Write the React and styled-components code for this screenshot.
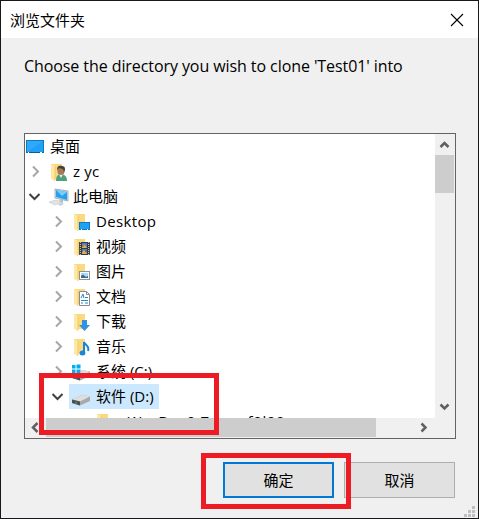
import React from "react";
import styled, { createGlobalStyle } from "styled-components";

const Global = createGlobalStyle`
  * { box-sizing: border-box; }
  body { margin: 0; background: #f0f0f0; }
`;
const Dialog = styled.div`
  position: relative;
  width: 479px;
  height: 519px;
  display: flex;
  flex-direction: column;
  background: #f0f0f0;
  border: 1px solid #18181a;
  color: #000;
  font: 15px/25px "Open Sans", "Noto Sans CJK SC", sans-serif;
  overflow: hidden;
`;
const TitleBar = styled.header`
  height: 37px;
  flex: none;
  display: flex;
  align-items: center;
  justify-content: space-between;
  padding: 0 14px 0 9px;
  background: #fff;
`;
const Title = styled.span`
  font-family: "Noto Sans CJK SC", sans-serif;
`;
const Message = styled.p`
  margin: 15px 0 0 23px;
  height: 80px;
  font-size: 16px;
  line-height: 26px;
  letter-spacing: -0.08px;
  white-space: nowrap;
`;
const TreePanel = styled.section`
  width: 432px;
  height: 306px;
  flex: none;
  margin-left: 23px;
  border: 1px solid #646464;
  display: grid;
  grid-template: 284px 20px / 410px 20px;
`;
const Tree = styled.div`
  background: #fff;
  overflow: hidden;
`;
const Row = styled.div`
  height: 25px;
  display: flex;
  align-items: center;
  padding-left: ${(p) => p.$indent}px;
`;
const Toggle = styled.span`
  width: 21px;
  height: 25px;
  flex: none;
  display: flex;
  align-items: center;
  padding-left: ${(p) => (p.$open ? 3 : 5)}px;
`;
const Item = styled.span`
  height: 25px;
  display: flex;
  align-items: center;
  padding: 0 5px 0 ${(p) => (p.$root ? 1 : 3)}px;
  background: ${(p) => (p.$selected ? "#cce8ff" : "transparent")};
`;
const Label = styled.span`
  margin-left: 4px;
  white-space: nowrap;
  letter-spacing: ${(p) => p.$spacing || 0}px;
`;
const VBar = styled.div`
  display: flex;
  flex-direction: column;
  align-items: flex-start;
  background: #f0f0f0;
`;
const HBar = styled.div`
  display: flex;
  background: #f0f0f0;
`;
const VThumb = styled.div`
  width: 19px;
  height: 38px;
  margin-bottom: auto;
  background: #cdcdcd;
`;
const HThumb = styled.div`
  width: 330px;
  height: 19px;
  margin-right: auto;
  background: #cdcdcd;
`;
const Arrow = styled.span`
  width: ${(p) => p.$w}px;
  height: ${(p) => p.$h}px;
  display: flex;
  align-items: center;
  justify-content: center;
`;
const Buttons = styled.footer`
  display: flex;
  gap: 10px;
  margin: 23px 0 0 222px;
`;
const Button = styled.button`
  width: 111px;
  height: 36px;
  padding: 0;
  border: ${(p) => (p.$primary ? "2px solid #0078d7" : "1px solid #adadad")};
  background: #e1e1e1;
  color: #000;
  font: 15px/20px "Noto Sans CJK SC", sans-serif;
`;
const Marker = styled.div`
  position: absolute;
  left: ${(p) => p.$x}px;
  top: ${(p) => p.$y}px;
  width: ${(p) => p.$w}px;
  height: ${(p) => p.$h}px;
  border: 5px solid #ed1c24;
  pointer-events: none;
`;
const Grip = styled.svg`
  position: absolute;
  right: 3px;
  bottom: 1px;
`;

const chevrons = {
  right: "M3 1.5L8 6.5L3 11.5",
  down: "M1.5 4L6.5 9L11.5 4",
  up: "M2.5 9L6.5 5L10.5 9",
  left: "M8.5 2L4 6.5L8.5 11",
  scrollRight: "M4.5 2.5L8.5 6.5L4.5 10.5",
  scrollDown: "M2.5 4.5L6.5 8.5L10.5 4.5",
};
const Chevron = ({ kind, color = "#606060", width = 2 }) => (
  <svg width="13" height="13" viewBox="0 0 13 13">
    <path d={chevrons[kind]} fill="none" stroke={color} strokeWidth={width} />
  </svg>
);

const FolderBase = () => (
  <>
    <path d="M2 2H10L13 2V17H2Z" fill="#f9da7e" />
    <path d="M2 2L6 4V19L2 17Z" fill="#ffe8a3" />
    <path d="M6 4V19" stroke="#e5bb55" strokeWidth=".6" />
  </>
);
const overlays = {
  user: (
    <>
      <path d="M7 19C7 14 9 12 12 12S18 14 18 19Z" fill="#4f9f7c" />
      <path d="M10 12L12 16L14 12Z" fill="#f3f5ef" />
      <ellipse cx="12" cy="8.5" rx="3.6" ry="4.5" fill="#a87955" />
      <path d="M8 8C8 4 10 3 13 4C16 4 17 7 15 10L14 7L10 6Z" fill="#454039" />
    </>
  ),
  desktop: (
    <>
      <rect x="7.5" y="10.5" width="10" height="7" fill="#20a2f4" stroke="#087acb" />
      <path d="M9 17.5H16" stroke="#fff" strokeDasharray="1 5" />
    </>
  ),
  video: (
    <>
      <rect x="7" y="5" width="11" height="13" fill="#3b3b3b" />
      <path d="M8.3 5V18M16.7 5V18" stroke="#ddd" strokeDasharray="1 1" />
      <rect x="10" y="6" width="5" height="5" fill="#3988d7" />
      <rect x="10" y="12" width="5" height="5" fill="#3988d7" />
      <path d="M10 10L12 7L15 11H10ZM10 16L12 13L15 17H10Z" fill="#f1ab36" />
      <path d="M10 9H12M13 14H15" stroke="#b84532" />
    </>
  ),
  picture: (
    <>
      <rect x="7.5" y="9.5" width="10" height="8" fill="#fff" stroke="#929292" />
      <rect x="9" y="11" width="7" height="5" fill="#a9daf8" />
      <path d="M9 14L11 12.5L14 15L16 14V16H9Z" fill="#376d88" />
    </>
  ),
  document: (
    <>
      <path d="M7.5 4.5H14.5L17.5 7.5V18.5H7.5Z" fill="#fff" stroke="#8b8b8b" />
      <path d="M14.5 4.5V7.5H17.5" fill="none" stroke="#8b8b8b" />
      <path d="M9 11L11 7L12 11M13 10.5H16M9 13.5H16M9 16H11M13 16H16" fill="none" stroke="#2489c5" />
    </>
  ),
  download: <path d="M10 8H15V13H18L12.5 19L7 13H10Z" fill="#3292df" />,
  music: (
    <>
      <path d="M12 5V16M12 5C13 8 18 9 16 14" fill="none" stroke="#1787d7" strokeWidth="2" />
      <ellipse cx="10.5" cy="16" rx="2.9" ry="2.5" fill="#1787d7" />
    </>
  ),
};
const DiskBody = () => (
  <>
    <path d="M0 12.5L10 8L18 9.5V14L8 18.5L0 16Z" fill="#a9a9a9" />
    <path d="M0 12.5L10 8L18 9.5L8 14.5Z" fill="#dedede" />
    <path d="M0 12.5L8 14.5V18.5L0 16Z" fill="#4b514d" />
    <path d="M4 15V16.5" stroke="#42d876" />
  </>
);
const Icon = ({ type }) => (
  <svg width="20" height="20" viewBox="0 0 20 20">
    {type === "screen" ? (
      <>
        <rect x=".5" y="3.5" width="17" height="12" fill="#20a1f5" stroke="#087bc5" />
        <path d="M1 15V4H17Z" fill="#3db2fb" opacity=".5" />
        <path d="M1 15.5H17" stroke="#075f9b" />
        <path d="M2 15.5H3M14 15.5H16" stroke="#fff" />
      </>
    ) : type === "computer" ? (
      <>
        <path d="M6 2L19 4V14L6 11Z" fill="#d1e1ea" stroke="#87969f" strokeWidth=".7" />
        <path d="M7 3L18 5V13L7 10Z" fill="#24a0ec" />
        <path d="M7 3L18 5L13 9Z" fill="#7bccfa" />
        <path d="M11 12L10 15L14 16V13Z" fill="#b6c0c5" />
        <path d="M0 15L7 13L13 15L6 18Z" fill="#e1e4e6" stroke="#b4babd" strokeWidth=".5" />
        <path d="M9 17L13 16L15 17L11 19Z" fill="#c7cbce" />
      </>
    ) : type === "disk" ? <DiskBody /> : type === "system" ? (
      <>
        <DiskBody />
        <path d="M-1 2H9V12H-1Z" fill="#fff" />
        <path d="M0 3H3.5V6.5H0ZM4.5 2.5H8.5V6.5H4.5ZM0 7.5H3.5V11H0ZM4.5 7.5H8.5V11.5H4.5Z" fill="#00adef" />
      </>
    ) : (
      <><FolderBase />{overlays[type]}</>
    )}
  </svg>
);

const rows = [
  ["桌面", "screen", 0],
  ["z yc", "user", 0, "right", 0.2],
  ["此电脑", "computer", 0, "down"],
  ["Desktop", "desktop", 23, "right", 0.35],
  ["视频", "video", 23, "right"],
  ["图片", "picture", 23, "right"],
  ["文档", "document", 23, "right"],
  ["下载", "download", 23, "right"],
  ["音乐", "music", 23, "right"],
  ["系统 (C:)", "system", 23, "right"],
  ["软件 (D:)", "disk", 23, "down"],
  ["xWorDev0.7-cxxsf0l00", "folder", 46, null, 0.6],
];

export default function App() {
  return (
    <>
      <Global />
      <Dialog>
        <TitleBar>
          <Title>浏览文件夹</Title>
          <svg width="14" height="14" viewBox="0 0 14 14">
            <path d="M1 1L13 13M13 1L1 13" stroke="#000" strokeWidth="1.1" />
          </svg>
        </TitleBar>
        <Message>Choose the directory you wish to clone 'Test01' into</Message>
        <TreePanel>
          <Tree>
            {rows.map(([label, type, indent, toggle, spacing], i) => (
              <Row key={label} $indent={indent}>
                {i > 0 && (
                  <Toggle $open={toggle === "down"}>
                    {toggle && <Chevron kind={toggle} color={toggle === "down" ? "#404040" : "#a6a6a6"} />}
                  </Toggle>
                )}
                <Item $root={i === 0} $selected={i === 10}>
                  <Icon type={type} />
                  <Label $spacing={spacing}>{label}</Label>
                </Item>
              </Row>
            ))}
          </Tree>
          <VBar>
            <Arrow $w={19} $h={21}><Chevron kind="up" width={2.5} /></Arrow>
            <VThumb />
            <Arrow $w={19} $h={24}><Chevron kind="scrollDown" width={2.5} /></Arrow>
          </VBar>
          <HBar>
            <Arrow $w={21} $h={19}><Chevron kind="left" width={2.5} /></Arrow>
            <HThumb />
            <Arrow $w={24} $h={19}><Chevron kind="scrollRight" width={2.5} /></Arrow>
          </HBar>
        </TreePanel>
        <Buttons>
          <Button $primary>确定</Button>
          <Button>取消</Button>
        </Buttons>
        <Grip width="11" height="11" viewBox="0 0 11 11">
          <path d="M8 0h3v3h-3ZM4 4h3v3h-3ZM8 4h3v3h-3ZM0 8h3v3h-3ZM4 8h3v3h-3ZM8 8h3v3h-3Z" fill="#bfbfbf" />
        </Grip>
        <Marker $x={38} $y={372} $w={180} $h={62} />
        <Marker $x={200} $y={452} $w={150} $h={56} />
      </Dialog>
    </>
  );
}
